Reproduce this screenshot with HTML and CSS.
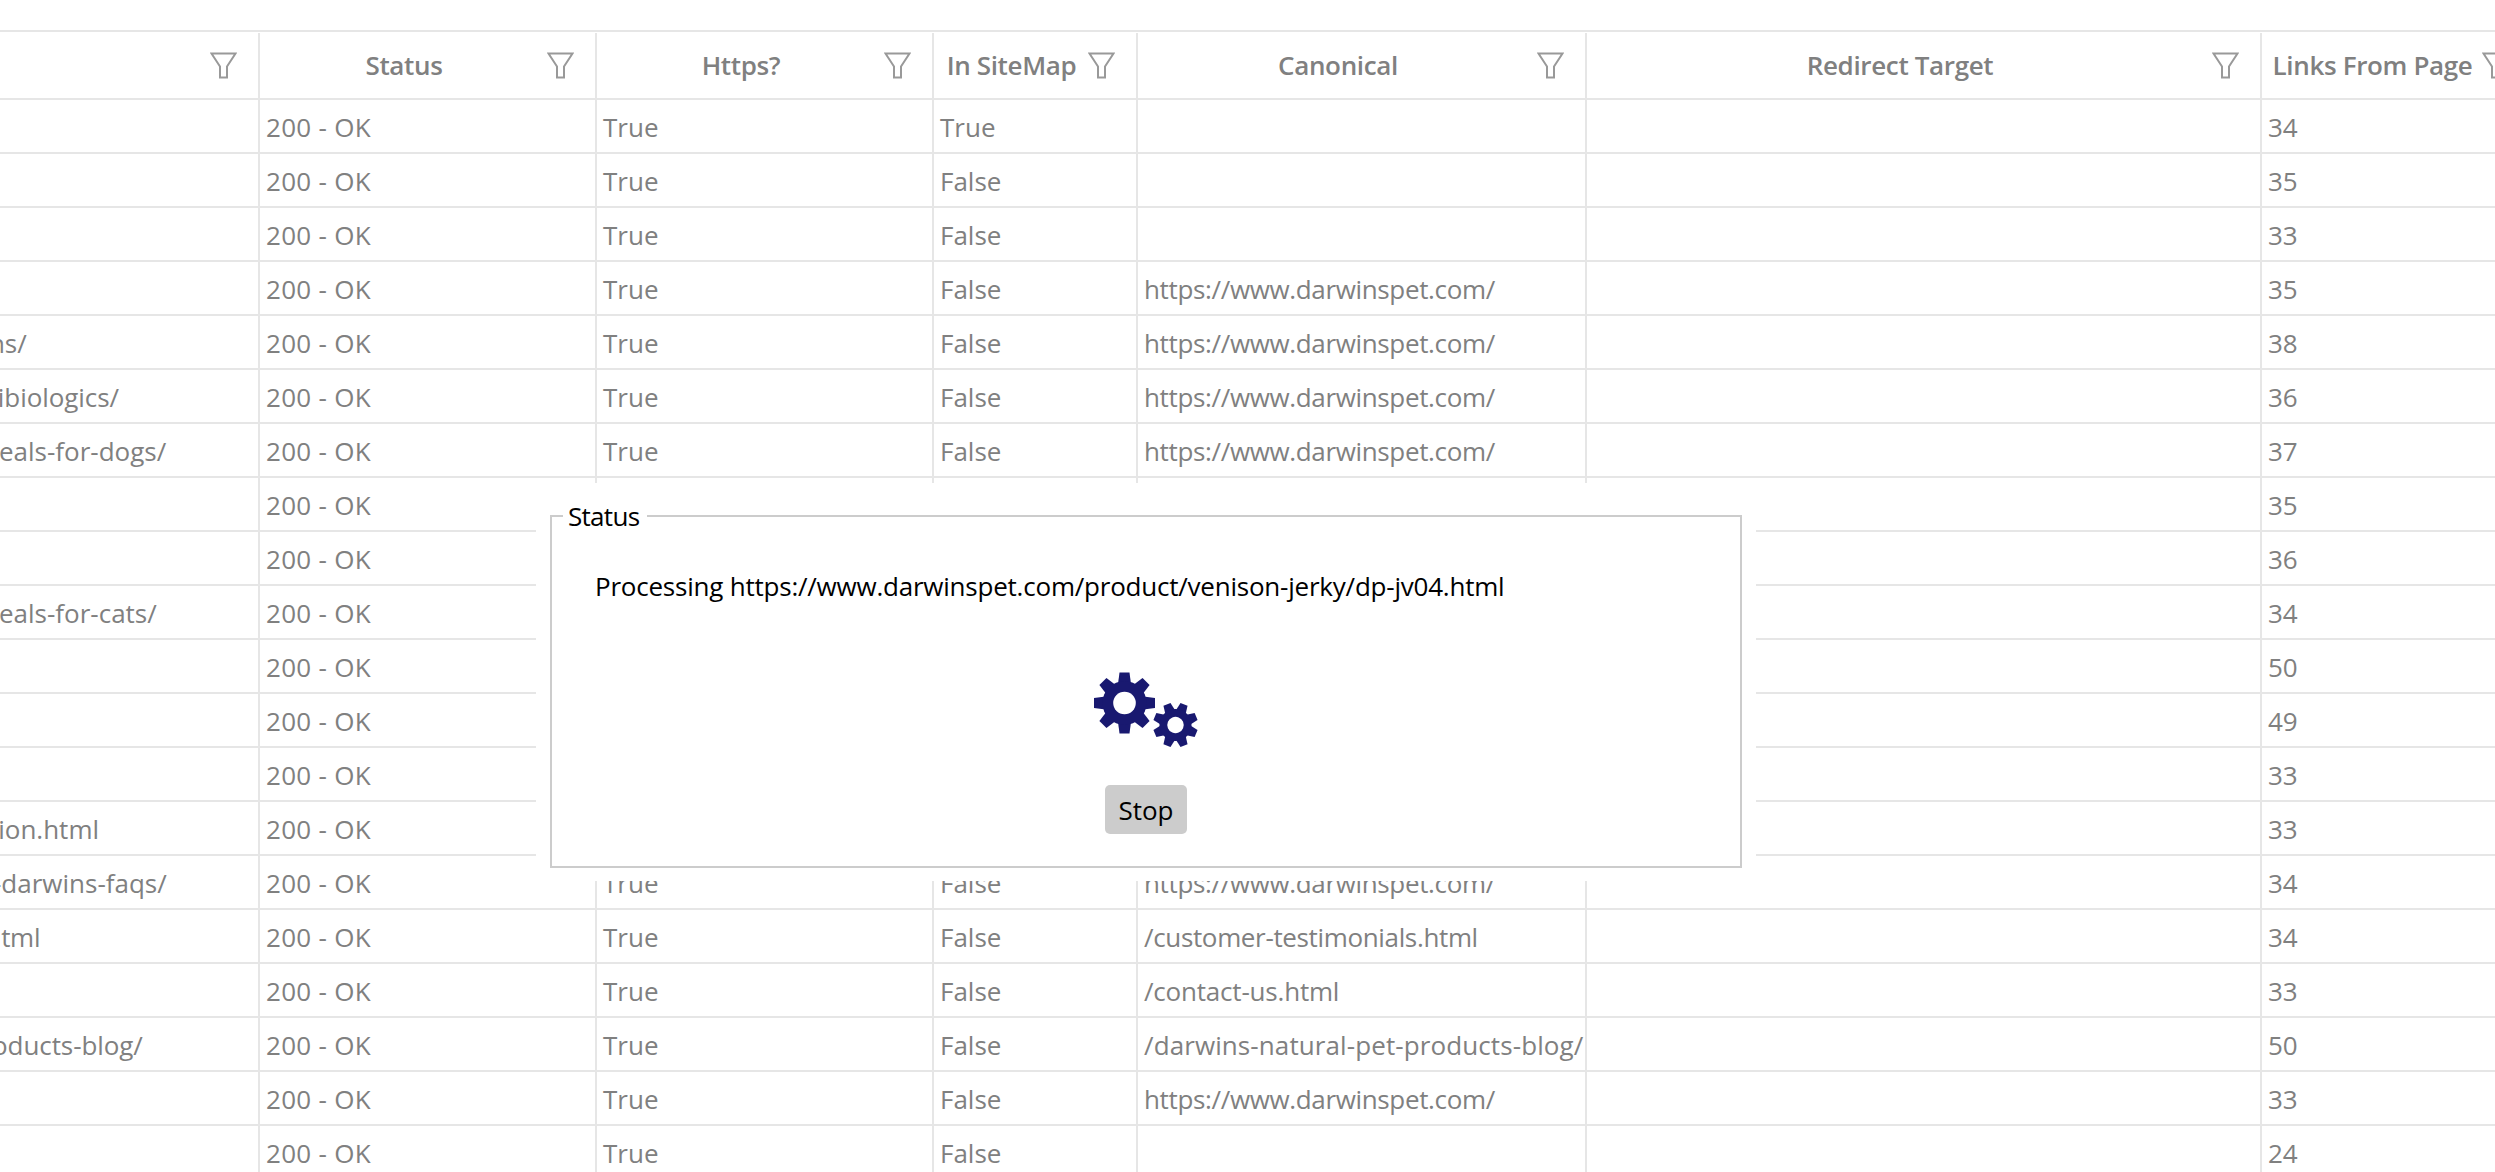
FILE: index.html
```html
<!DOCTYPE html>
<html lang="en">
<head>
<meta charset="utf-8">
<title>Crawl results</title>
<link rel="stylesheet" href="styles.css">
</head>
<body>
<svg class="defs" width="0" height="0" aria-hidden="true">
  <symbol id="funnel" viewBox="0 0 27 27"><path d="M1.5 1.5H25.5L17 14.5V25.5H10V14.5Z" fill="none" stroke="currentColor" stroke-width="2"/></symbol>
  <polygon id="tooth-big" points="-5,-30.5 5,-30.5 6.5,-19 -6.5,-19"/>
  <polygon id="tooth-small" points="-3.8,-22.3 3.8,-22.3 5.2,-14 -5.2,-14"/>
</svg>
<div class="viewport">
<table class="grid">
  <colgroup>
    <col class="c-url"><col class="c-status"><col class="c-https"><col class="c-sitemap"><col class="c-canon"><col class="c-redirect"><col class="c-links">
  </colgroup>
  <thead>
    <tr>
      <th><div class="head"><span class="title">URL</span><svg class="filter"><use href="#funnel"/></svg></div></th>
      <th><div class="head"><span class="title">Status</span><svg class="filter"><use href="#funnel"/></svg></div></th>
      <th><div class="head"><span class="title">Https?</span><svg class="filter"><use href="#funnel"/></svg></div></th>
      <th><div class="head"><span class="title">In SiteMap</span><svg class="filter"><use href="#funnel"/></svg></div></th>
      <th><div class="head"><span class="title">Canonical</span><svg class="filter"><use href="#funnel"/></svg></div></th>
      <th><div class="head"><span class="title">Redirect Target</span><svg class="filter"><use href="#funnel"/></svg></div></th>
      <th><div class="head"><span class="title">Links From Page</span><svg class="filter"><use href="#funnel"/></svg></div></th>
    </tr>
  </thead>
  <tbody>
    <tr><td>https://www.darwinspet.com/</td><td>200 - OK</td><td>True</td><td>True</td><td></td><td></td><td>34</td></tr>
    <tr><td>https://www.darwinspet.com/about-us/</td><td>200 - OK</td><td>True</td><td>False</td><td></td><td></td><td>35</td></tr>
    <tr><td>https://www.darwinspet.com/blog/</td><td>200 - OK</td><td>True</td><td>False</td><td></td><td></td><td>33</td></tr>
    <tr><td>https://www.darwinspet.com/pet-health/</td><td>200 - OK</td><td>True</td><td>False</td><td class="tight">https://www.darwinspet.com/</td><td></td><td>35</td></tr>
    <tr><td>https://www.darwinspet.com/pets-health/vaccinations/</td><td>200 - OK</td><td>True</td><td>False</td><td class="tight">https://www.darwinspet.com/</td><td></td><td>38</td></tr>
    <tr><td class="trim">https://www.darwinspet.com/pet-health/dangers-antibiologics/</td><td>200 - OK</td><td>True</td><td>False</td><td class="tight">https://www.darwinspet.com/</td><td></td><td>36</td></tr>
    <tr><td>https://www.darwinspet.com/darwins-natural-raw-meals-for-dogs/</td><td>200 - OK</td><td>True</td><td>False</td><td class="tight">https://www.darwinspet.com/</td><td></td><td>37</td></tr>
    <tr><td>https://www.darwinspet.com/dogs/</td><td>200 - OK</td><td>True</td><td>False</td><td class="tight">https://www.darwinspet.com/</td><td></td><td>35</td></tr>
    <tr><td>https://www.darwinspet.com/cats/</td><td>200 - OK</td><td>True</td><td>False</td><td class="tight">https://www.darwinspet.com/</td><td></td><td>36</td></tr>
    <tr><td>https://www.darwinspet.com/darwins-natural-raw-meals-for-cats/</td><td>200 - OK</td><td>True</td><td>False</td><td class="tight">https://www.darwinspet.com/</td><td></td><td>34</td></tr>
    <tr><td>https://www.darwinspet.com/products/</td><td>200 - OK</td><td>True</td><td>False</td><td class="tight">https://www.darwinspet.com/</td><td></td><td>50</td></tr>
    <tr><td>https://www.darwinspet.com/reviews/</td><td>200 - OK</td><td>True</td><td>False</td><td class="tight">https://www.darwinspet.com/</td><td></td><td>49</td></tr>
    <tr><td>https://www.darwinspet.com/faq/</td><td>200 - OK</td><td>True</td><td>False</td><td class="tight">https://www.darwinspet.com/</td><td></td><td>33</td></tr>
    <tr><td>https://www.darwinspet.com/raw-pet-foods-in-nutrition.html</td><td>200 - OK</td><td>True</td><td>False</td><td class="tight">https://www.darwinspet.com/</td><td></td><td>33</td></tr>
    <tr><td>https://www.darwinspet.com/customer-services/our-darwins-faqs/</td><td>200 - OK</td><td>True</td><td>False</td><td class="tight">https://www.darwinspet.com/</td><td></td><td>34</td></tr>
    <tr><td class="fit">https://www.darwinspet.com/customer-testimonials.html</td><td>200 - OK</td><td>True</td><td>False</td><td class="tight">/customer-testimonials.html</td><td></td><td>34</td></tr>
    <tr><td>https://www.darwinspet.com/contact-us.html</td><td>200 - OK</td><td>True</td><td>False</td><td class="snug">/contact-us.html</td><td></td><td>33</td></tr>
    <tr><td class="trim">https://www.darwinspet.com/darwins-natural-pet-products-blog/</td><td>200 - OK</td><td>True</td><td>False</td><td class="wide">/darwins-natural-pet-products-blog/</td><td></td><td>50</td></tr>
    <tr><td>https://www.darwinspet.com/login/</td><td>200 - OK</td><td>True</td><td>False</td><td class="tight">https://www.darwinspet.com/</td><td></td><td>33</td></tr>
    <tr><td>https://www.darwinspet.com/cart/</td><td>200 - OK</td><td>True</td><td>False</td><td></td><td></td><td>24</td></tr>
  </tbody>
</table>
</div>
<div class="overlay">
  <fieldset class="status">
    <legend>Status</legend>
    <div class="status-body">
      <p class="message">Processing https://www.darwinspet.com/product/venison-jerky/dp-jv04.html</p>
      <svg class="gears" viewBox="0 0 108 76" width="108" height="76" aria-hidden="true">
        <g transform="translate(32.5 31)">
          <use href="#tooth-big"/>
          <use href="#tooth-big" transform="rotate(45)"/>
          <use href="#tooth-big" transform="rotate(90)"/>
          <use href="#tooth-big" transform="rotate(135)"/>
          <use href="#tooth-big" transform="rotate(180)"/>
          <use href="#tooth-big" transform="rotate(225)"/>
          <use href="#tooth-big" transform="rotate(270)"/>
          <use href="#tooth-big" transform="rotate(315)"/>
          <circle r="22"/>
          <circle class="hole" r="11.3"/>
        </g>
        <g transform="translate(83.5 53) rotate(22.5)">
          <use href="#tooth-small"/>
          <use href="#tooth-small" transform="rotate(45)"/>
          <use href="#tooth-small" transform="rotate(90)"/>
          <use href="#tooth-small" transform="rotate(135)"/>
          <use href="#tooth-small" transform="rotate(180)"/>
          <use href="#tooth-small" transform="rotate(225)"/>
          <use href="#tooth-small" transform="rotate(270)"/>
          <use href="#tooth-small" transform="rotate(315)"/>
          <circle r="16"/>
          <circle class="hole" r="8.2"/>
        </g>
      </svg>
      <button class="stop" type="button">Stop</button>
    </div>
  </fieldset>
</div>
</body>
</html>
```
FILE: styles.css
```css
html, body {
  margin: 0;
  height: 100%;
  overflow: hidden;
  background: #fff;
}
body {
  position: relative;
  font-family: "Open Sans", "Noto Sans", sans-serif;
  font-size: 26px;
  line-height: 36px;
  color: #808080;
}
.defs { position: absolute; }
.viewport {
  padding-top: 30px;
  overflow: hidden;
}
.grid {
  width: 3177px;
  margin-left: -645px;
  table-layout: fixed;
  border-collapse: separate;
  border-spacing: 0;
  border-top: 2px solid #e6e6e6;
}
.c-url { width: 905px; }
.c-status, .c-https { width: 337px; }
.c-sitemap { width: 204px; }
.c-canon { width: 449px; }
.c-redirect { width: 675px; }
.c-links { width: 270px; }
th {
  padding: 1px 0 0;
  border-bottom: 2px solid #e6e6e6;
  font-weight: 600;
  letter-spacing: -0.35px;
}
.head {
  display: flex;
  align-items: center;
  height: 65px;
  border-right: 2px solid #e6e6e6;
  padding: 0 21px 0 1px;
}
.title {
  flex: 1;
  padding-bottom: 2px;
  text-align: center;
  white-space: nowrap;
}
.filter {
  flex: none;
  width: 27px;
  height: 27px;
  color: #999;
}
td {
  box-sizing: border-box;
  height: 54px;
  padding: 2px 0 0 6px;
  border-right: 2px solid #e6e6e6;
  border-bottom: 2px solid #e6e6e6;
  white-space: nowrap;
  overflow: hidden;
}
td:nth-child(2) { letter-spacing: 0.3px; }
td.tight { letter-spacing: -0.35px; }
td.fit { letter-spacing: -0.28px; }
td.snug { letter-spacing: -0.2px; }
td.trim { letter-spacing: -0.08px; }
td.wide { letter-spacing: 0.1px; }
.overlay {
  position: absolute;
  left: 536px;
  top: 483px;
  box-sizing: border-box;
  width: 1220px;
  height: 398px;
  padding: 15px 14px 0;
  background: #fff;
}
.status {
  margin: 0;
  min-width: 0;
  padding: 0;
  border: 2px solid #ccc;
  color: #000;
}
.status legend {
  margin-left: 11px;
  padding: 0 8px 0 5px;
  letter-spacing: -0.7px;
}
.status-body {
  display: flex;
  flex-direction: column;
  align-items: center;
  padding: 34px 43px 32px;
}
.message {
  align-self: flex-start;
  margin: 0;
  letter-spacing: -0.22px;
  white-space: nowrap;
}
.gears {
  margin-top: 68px;
  fill: #191970;
}
.gears .hole { fill: #fff; }
.stop {
  box-sizing: border-box;
  width: 82px;
  height: 49px;
  margin-top: 37px;
  padding: 0;
  border: 0;
  border-radius: 5px;
  background: #ccc;
  color: #000;
  font: inherit;
}
```
